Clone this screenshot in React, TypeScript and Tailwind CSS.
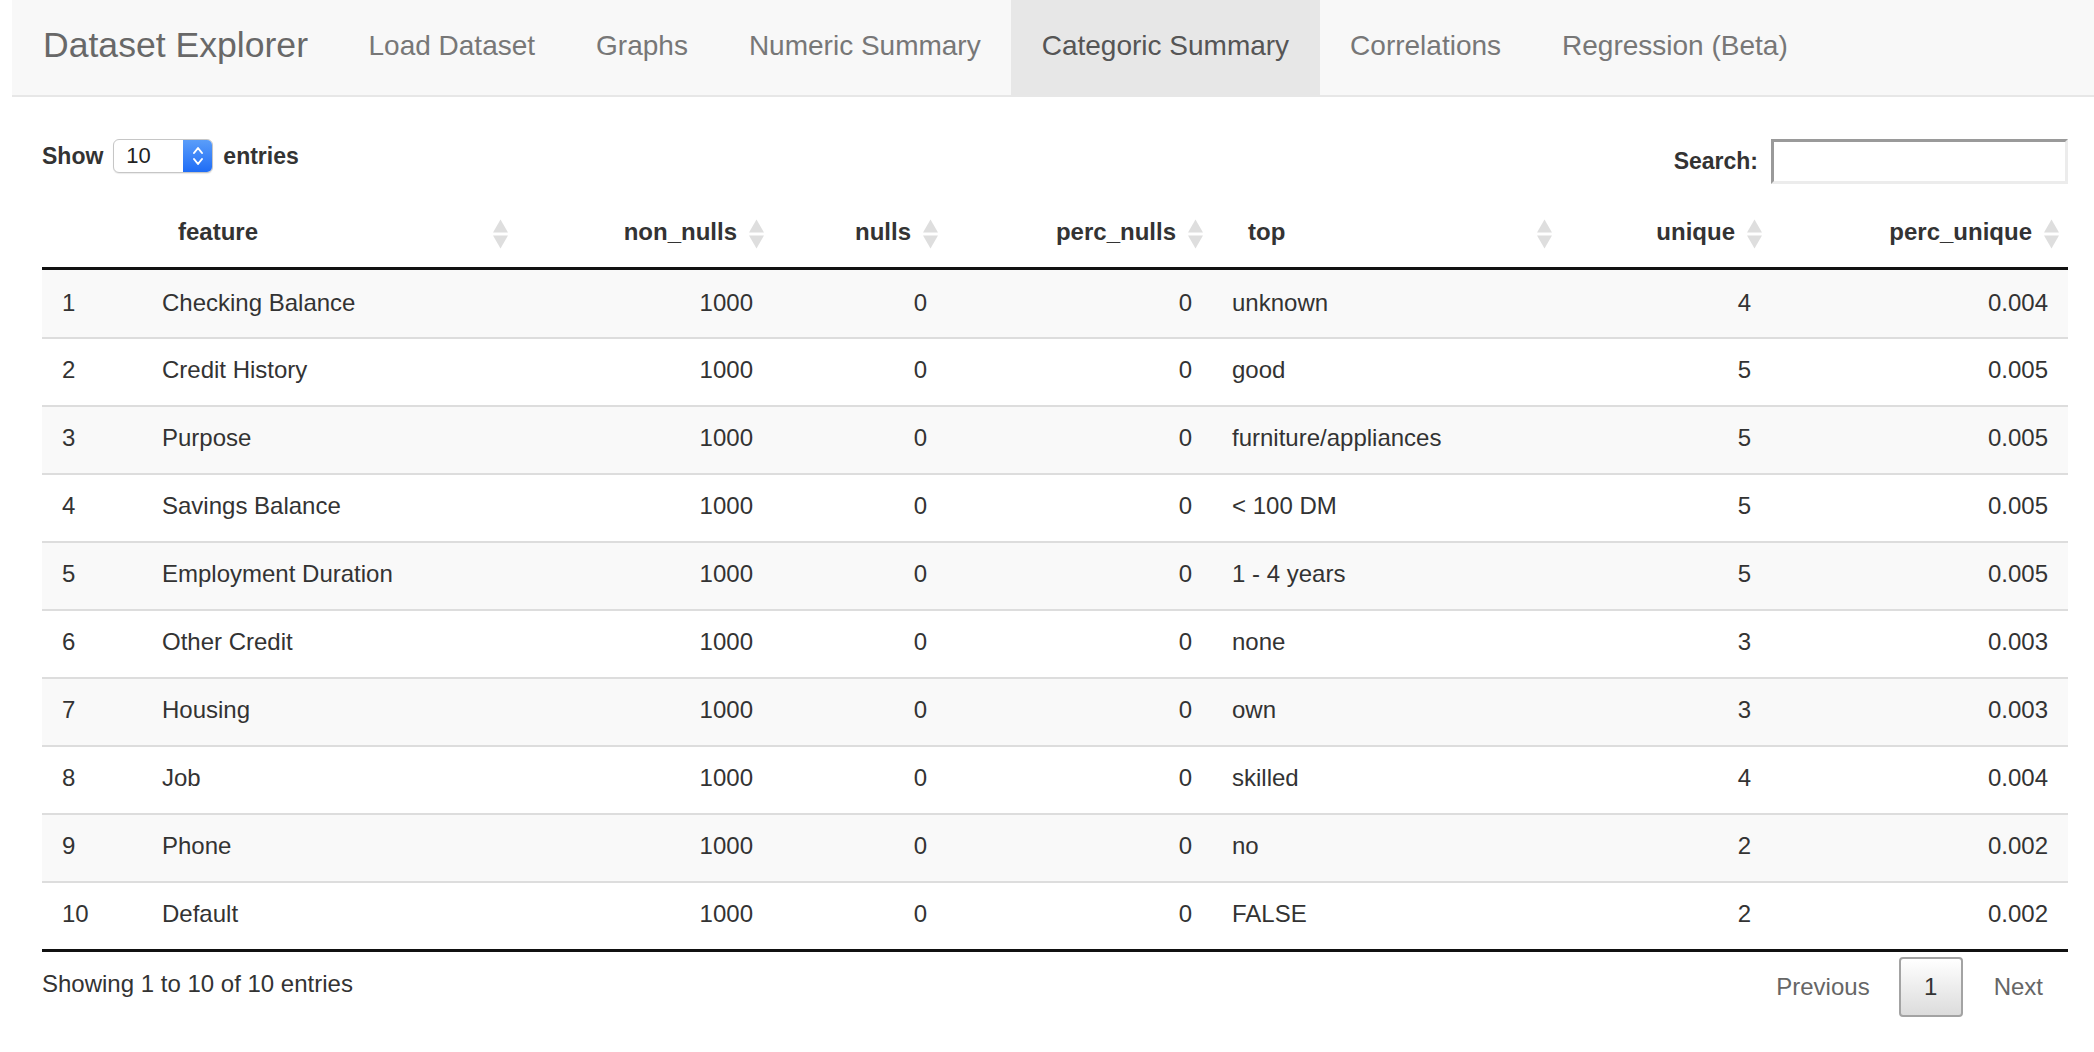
import React from "react";

const TABS = [
  "Load Dataset",
  "Graphs",
  "Numeric Summary",
  "Categoric Summary",
  "Correlations",
  "Regression (Beta)",
];

type Row = {
  feature: string;
  nonNulls: number;
  nulls: number;
  percNulls: number;
  top: string;
  unique: number;
  percUnique: string;
};

const ROWS: Row[] = [
  { feature: "Checking Balance", nonNulls: 1000, nulls: 0, percNulls: 0, top: "unknown", unique: 4, percUnique: "0.004" },
  { feature: "Credit History", nonNulls: 1000, nulls: 0, percNulls: 0, top: "good", unique: 5, percUnique: "0.005" },
  { feature: "Purpose", nonNulls: 1000, nulls: 0, percNulls: 0, top: "furniture/appliances", unique: 5, percUnique: "0.005" },
  { feature: "Savings Balance", nonNulls: 1000, nulls: 0, percNulls: 0, top: "< 100 DM", unique: 5, percUnique: "0.005" },
  { feature: "Employment Duration", nonNulls: 1000, nulls: 0, percNulls: 0, top: "1 - 4 years", unique: 5, percUnique: "0.005" },
  { feature: "Other Credit", nonNulls: 1000, nulls: 0, percNulls: 0, top: "none", unique: 3, percUnique: "0.003" },
  { feature: "Housing", nonNulls: 1000, nulls: 0, percNulls: 0, top: "own", unique: 3, percUnique: "0.003" },
  { feature: "Job", nonNulls: 1000, nulls: 0, percNulls: 0, top: "skilled", unique: 4, percUnique: "0.004" },
  { feature: "Phone", nonNulls: 1000, nulls: 0, percNulls: 0, top: "no", unique: 2, percUnique: "0.002" },
  { feature: "Default", nonNulls: 1000, nulls: 0, percNulls: 0, top: "FALSE", unique: 2, percUnique: "0.002" },
];

function SortIcon() {
  return (
    <svg
      width="15"
      height="31"
      viewBox="0 0 15 31"
      className="absolute right-[9px] top-1/2 -translate-y-1/2"
    >
      <polygon points="7.5,1 15,14 0,14" fill="#dedede" />
      <polygon points="0,17 15,17 7.5,30" fill="#dedede" />
    </svg>
  );
}

function Th({ label, align }: { label: string; align: "left" | "right" }) {
  return (
    <th
      className={`relative border-b-[3px] border-[#111] px-[36px] pt-[14px] pb-[18px] font-bold leading-[34px] ${
        align === "right" ? "text-right" : "text-left"
      }`}
    >
      {label}
      <SortIcon />
    </th>
  );
}

export default function App() {
  return (
    <div className="min-h-screen bg-white text-[#333]" style={{ fontFamily: '"Liberation Sans", Arial, sans-serif' }}>
      {/* Navbar */}
      <nav className="ml-[12px] flex h-[97px] items-stretch border-b-2 border-[#e7e7e7] bg-[#f8f8f8]">
        <div className="flex items-center pb-[3px] pl-[31px] pr-[30px] text-[35.6px] text-[#686868]">
          Dataset Explorer
        </div>
        {TABS.map((tab) => (
          <div
            key={tab}
            className={`flex items-center px-[30.5px] pb-[3px] text-[28px] ${
              tab === "Categoric Summary" ? "bg-[#e7e7e7] text-[#555]" : "text-[#777]"
            }`}
          >
            {tab}
          </div>
        ))}
      </nav>

      <div className="pl-[42px] pr-[26px]">
        {/* Controls */}
        <div className="mt-[41px] flex items-start justify-between">
          <div className="mt-[1px] flex h-[34px] items-center gap-[10px] text-[23px] font-bold">
            <span>Show</span>
            <div className="flex h-[34px] w-[100px] overflow-hidden rounded-[6px] border border-[#c6c6c6] bg-white shadow-[0_1px_1px_rgba(0,0,0,0.08)]">
              <span className="flex-1 pl-[12px] text-[22px] font-normal leading-[32px] text-[#222]">10</span>
              <span className="flex w-[29px] items-center justify-center bg-gradient-to-b from-[#5a9df9] to-[#1e6cf6]">
                <svg width="12" height="22" viewBox="0 0 12 22" fill="none" stroke="white" strokeWidth="2" strokeLinecap="round" strokeLinejoin="round">
                  <polyline points="2,8 6,3 10,8" />
                  <polyline points="2,14 6,19 10,14" />
                </svg>
              </span>
            </div>
            <span>entries</span>
          </div>
          <div className="mt-[1px] flex h-[45px] items-center gap-[13px] text-[23px] font-bold">
            <span>Search:</span>
            <input
              className="h-[45px] w-[297px] border-[3px] border-t-[#9a9a9a] border-l-[#9a9a9a] border-b-[#ececec] border-r-[#ececec] bg-white outline-none"
              type="text"
            />
          </div>
        </div>

        {/* Table */}
        <table className="mt-[17px] w-full table-fixed border-separate border-spacing-0 text-[24px]">
          <colgroup>
            <col className="w-[100px]" />
            <col className="w-[375px]" />
            <col className="w-[256px]" />
            <col className="w-[174px]" />
            <col className="w-[265px]" />
            <col className="w-[349px]" />
            <col className="w-[210px]" />
            <col className="w-[297px]" />
          </colgroup>
          <thead>
            <tr>
              <th className="border-b-[3px] border-[#111]" />
              <Th label="feature" align="left" />
              <Th label="non_nulls" align="right" />
              <Th label="nulls" align="right" />
              <Th label="perc_nulls" align="right" />
              <Th label="top" align="left" />
              <Th label="unique" align="right" />
              <Th label="perc_unique" align="right" />
            </tr>
          </thead>
          <tbody>
            {ROWS.map((row, i) => {
              const cell =
                i === 0
                  ? "px-[20px] pt-[16px] pb-[17px] leading-[34px]"
                  : "border-t-2 border-[#ddd] px-[20px] pt-[14px] pb-[18px] leading-[34px]";
              const last = i === ROWS.length - 1 ? " border-b-[3px] border-b-[#111]" : "";
              return (
                <tr key={row.feature} className={i % 2 === 0 ? "bg-[#f9f9f9]" : "bg-white"}>
                  <td className={cell + last}>{i + 1}</td>
                  <td className={cell + last}>{row.feature}</td>
                  <td className={cell + last + " text-right"}>{row.nonNulls}</td>
                  <td className={cell + last + " text-right"}>{row.nulls}</td>
                  <td className={cell + last + " text-right"}>{row.percNulls}</td>
                  <td className={cell + last}>{row.top}</td>
                  <td className={cell + last + " text-right"}>{row.unique}</td>
                  <td className={cell + last + " text-right"}>{row.percUnique}</td>
                </tr>
              );
            })}
          </tbody>
        </table>

        {/* Footer */}
        <div className="mt-[5px] flex items-start justify-between text-[24px]">
          <div className="pt-[13px] leading-[28px]">Showing 1 to 10 of 10 entries</div>
          <div className="flex h-[60px] items-center">
            <span className="pl-[25px] pr-[29px] text-[#666]">Previous</span>
            <span className="flex h-[60px] w-[64px] items-center justify-center rounded-[4px] border-2 border-[#a3a3a3] bg-gradient-to-b from-white to-[#dcdcdc] text-[#333]">
              1
            </span>
            <span className="pl-[31px] pr-[25px] text-[#666]">Next</span>
          </div>
        </div>
      </div>
    </div>
  );
}
